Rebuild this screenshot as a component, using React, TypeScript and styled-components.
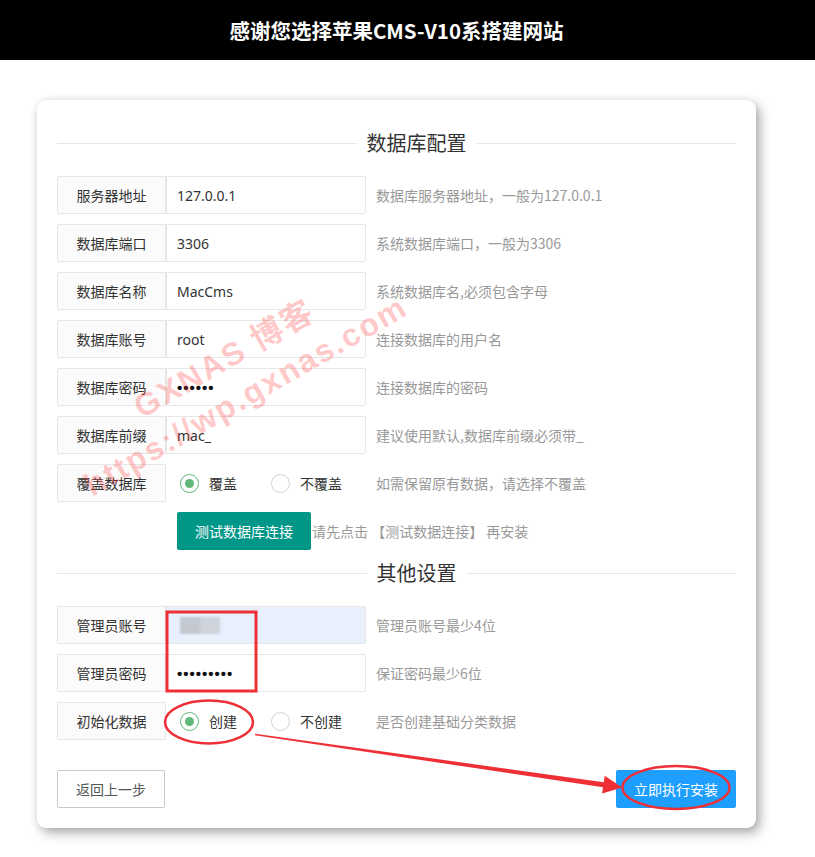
import React from "react";
import styled, { createGlobalStyle, css } from "styled-components";

const GlobalStyle = createGlobalStyle`
  html, body {
    margin: 0;
    padding: 0;
    background: #ffffff;
  }
  body {
    font-family: "Noto Sans", "Noto Sans CJK SC", sans-serif;
    font-size: 14px;
    color: #333;
  }
  * { box-sizing: border-box; }
`;

const Page = styled.div`
  position: relative;
  width: 815px;
  min-height: 857px;
  overflow: hidden;
`;

const Header = styled.header`
  height: 60px;
  background: #000;
  color: #fff;
  display: flex;
  align-items: center;
  justify-content: center;
  padding-right: 22px;
  font-family: "Noto Sans CJK SC", sans-serif;
  font-weight: 700;
  font-size: 20.5px;
`;

const Card = styled.section`
  width: 719px;
  margin: 40px 0 29px 37px;
  padding: 29px 20px 20px;
  background: #fff;
  border-radius: 9px;
  box-shadow: 4px 5px 12px rgba(0, 0, 0, 0.32), 0 0 8px rgba(0, 0, 0, 0.07);
`;

const Legend = styled.div`
  display: flex;
  align-items: center;
  height: 28px;
  margin-bottom: 19px;
`;

const LegendLine = styled.span<{ $lead?: boolean }>`
  flex: ${(p) => (p.$lead ? "1 0 40px" : "1 0 0")};
  height: 1px;
  background: #e6e6e6;
`;

const LegendText = styled.h2`
  margin: 0;
  padding: 0 10px;
  font-family: "Noto Sans CJK SC", sans-serif;
  font-size: 20px;
  font-weight: 400;
  line-height: 28px;
  color: #333;
`;

const Row = styled.div`
  display: flex;
  align-items: stretch;
  height: 38px;
  margin-bottom: 10px;
`;

const Label = styled.div`
  width: 109px;
  flex: none;
  border: 1px solid #e6e6e6;
  border-radius: 2px 0 0 2px;
  background: #fbfbfb;
  display: flex;
  align-items: center;
  justify-content: center;
  font-family: "Noto Sans CJK SC", sans-serif;
  font-size: 14px;
  color: #333;
`;

const Field = styled.div<{ $autofill?: boolean }>`
  width: 200px;
  flex: none;
  border: 1px solid #e6e6e6;
  border-radius: 0 2px 2px 0;
  background: ${(p) => (p.$autofill ? "#e8f0fe" : "#fff")};
  display: flex;
  align-items: center;
  padding-left: 10px;
  font-size: 14px;
  color: #333;
`;

const Secret = styled.span`
  font-family: "Liberation Sans", sans-serif;
  font-size: 15px;
  font-weight: 700;
  letter-spacing: 1px;
  color: #111;
`;

const BlurMask = styled.span`
  display: flex;
  margin-left: 3px;
  filter: blur(1.2px);
`;

const BlurBlock = styled.span<{ $shade: string }>`
  width: 20px;
  height: 17px;
  background: ${(p) => p.$shade};
`;

const Hint = styled.div`
  margin-left: 10px;
  display: flex;
  align-items: center;
  font-family: "Noto Sans CJK SC", sans-serif;
  font-size: 14px;
  color: #999;
  white-space: nowrap;
`;

const RadioGroup = styled.div`
  width: 200px;
  flex: none;
  display: flex;
  align-items: center;
  gap: 34px;
  padding-left: 14px;
`;

const RadioItem = styled.label`
  display: flex;
  align-items: center;
  gap: 10px;
  font-family: "Noto Sans CJK SC", sans-serif;
  font-size: 14px;
  color: #333;
`;

const RadioDot = styled.span<{ $checked?: boolean }>`
  width: 19px;
  height: 19px;
  border-radius: 50%;
  border: 1.5px solid ${(p) => (p.$checked ? "#5fb878" : "#d2d2d2")};
  display: flex;
  align-items: center;
  justify-content: center;
  &::after {
    content: "";
    width: 9px;
    height: 9px;
    border-radius: 50%;
    background: #5fb878;
    display: ${(p) => (p.$checked ? "block" : "none")};
  }
`;

const ActionRow = styled.div`
  display: flex;
  align-items: center;
  margin: 0 0 9px 120px;
  height: 38px;
`;

const Button = styled.button<{ $variant: "teal" | "plain" | "blue" }>`
  height: 38px;
  padding: 0 18px;
  border-radius: 2px;
  font-family: "Noto Sans CJK SC", sans-serif;
  font-size: 14px;
  white-space: nowrap;
  cursor: pointer;
  ${(p) =>
    p.$variant === "teal" &&
    css`
      background: #009688;
      color: #fff;
      border: none;
    `}
  ${(p) =>
    p.$variant === "blue" &&
    css`
      background: #1e9fff;
      color: #fff;
      border: none;
    `}
  ${(p) =>
    p.$variant === "plain" &&
    css`
      background: #fff;
      color: #555;
      border: 1px solid #c9c9c9;
    `}
`;

const InlineHint = styled.span`
  margin-left: 1px;
  font-family: "Noto Sans CJK SC", sans-serif;
  font-size: 14px;
  color: #999;
  white-space: pre;
`;

const Footer = styled.div`
  display: flex;
  justify-content: space-between;
  margin-top: 30px;
`;

const Overlay = styled.svg`
  position: absolute;
  left: 0;
  top: 0;
  pointer-events: none;
`;

type TextRow = { label: string; value: string; hint: string; secret?: boolean };

const dbRows: TextRow[] = [
  { label: "服务器地址", value: "127.0.0.1", hint: "数据库服务器地址，一般为127.0.0.1" },
  { label: "数据库端口", value: "3306", hint: "系统数据库端口，一般为3306" },
  { label: "数据库名称", value: "MacCms", hint: "系统数据库名,必须包含字母" },
  { label: "数据库账号", value: "root", hint: "连接数据库的用户名" },
  { label: "数据库密码", value: "••••••", hint: "连接数据库的密码", secret: true },
  { label: "数据库前缀", value: "mac_", hint: "建议使用默认,数据库前缀必须带_" },
];

function Radio({ checked, children }: { checked?: boolean; children: React.ReactNode }) {
  return (
    <RadioItem>
      <RadioDot $checked={checked} />
      {children}
    </RadioItem>
  );
}

export default function App() {
  return (
    <Page>
      <GlobalStyle />
      <Header>感谢您选择苹果CMS-V10系搭建网站</Header>
      <Card>
        <Legend>
          <LegendLine $lead />
          <LegendText>数据库配置</LegendText>
          <LegendLine />
        </Legend>
        {dbRows.map((r) => (
          <Row key={r.label}>
            <Label>{r.label}</Label>
            <Field>{r.secret ? <Secret>{r.value}</Secret> : r.value}</Field>
            <Hint>{r.hint}</Hint>
          </Row>
        ))}
        <Row>
          <Label>覆盖数据库</Label>
          <RadioGroup>
            <Radio checked>覆盖</Radio>
            <Radio>不覆盖</Radio>
          </RadioGroup>
          <Hint>如需保留原有数据，请选择不覆盖</Hint>
        </Row>
        <ActionRow>
          <Button $variant="teal">测试数据库连接</Button>
          <InlineHint>请先点击 【测试数据连接】 再安装</InlineHint>
        </ActionRow>
        <Legend>
          <LegendLine $lead />
          <LegendText>其他设置</LegendText>
          <LegendLine />
        </Legend>
        <Row>
          <Label>管理员账号</Label>
          <Field $autofill>
            <BlurMask>
              <BlurBlock $shade="#c4c8d1" />
              <BlurBlock $shade="#cfd3db" />
            </BlurMask>
          </Field>
          <Hint>管理员账号最少4位</Hint>
        </Row>
        <Row>
          <Label>管理员密码</Label>
          <Field>
            <Secret>•••••••••</Secret>
          </Field>
          <Hint>保证密码最少6位</Hint>
        </Row>
        <Row>
          <Label>初始化数据</Label>
          <RadioGroup>
            <Radio checked>创建</Radio>
            <Radio>不创建</Radio>
          </RadioGroup>
          <Hint>是否创建基础分类数据</Hint>
        </Row>
        <Footer>
          <Button $variant="plain">返回上一步</Button>
          <Button $variant="blue">立即执行安装</Button>
        </Footer>
      </Card>

      <Overlay width="815" height="857" viewBox="0 0 815 857">
        <g
          fill="#ff2a2a"
          fillOpacity="0.26"
          fontFamily="'Liberation Sans', 'Noto Sans CJK SC', sans-serif"
          fontWeight="700"
          fontSize="32"
          letterSpacing="2"
        >
          <text x="142" y="419" transform="rotate(-30 142 419)">GXNAS 博客</text>
          <text x="92" y="497" transform="rotate(-30 92 497)">https://wp.gxnas.com</text>
        </g>
        <g stroke="#ee3036" fill="none">
          <rect x="167" y="612" width="89" height="79" strokeWidth="3" />
          <ellipse cx="209" cy="722" rx="44" ry="21.5" strokeWidth="2.5" />
          <ellipse cx="676" cy="787.5" rx="53.5" ry="21.5" strokeWidth="2.5" />
        </g>
        <polygon
          fill="#ee3036"
          points="255.1,733.8 603.8,782.2 604.7,775.8 622.2,787.4 602.1,793.6 603.0,787.2 254.9,735.2"
        />
      </Overlay>
    </Page>
  );
}
